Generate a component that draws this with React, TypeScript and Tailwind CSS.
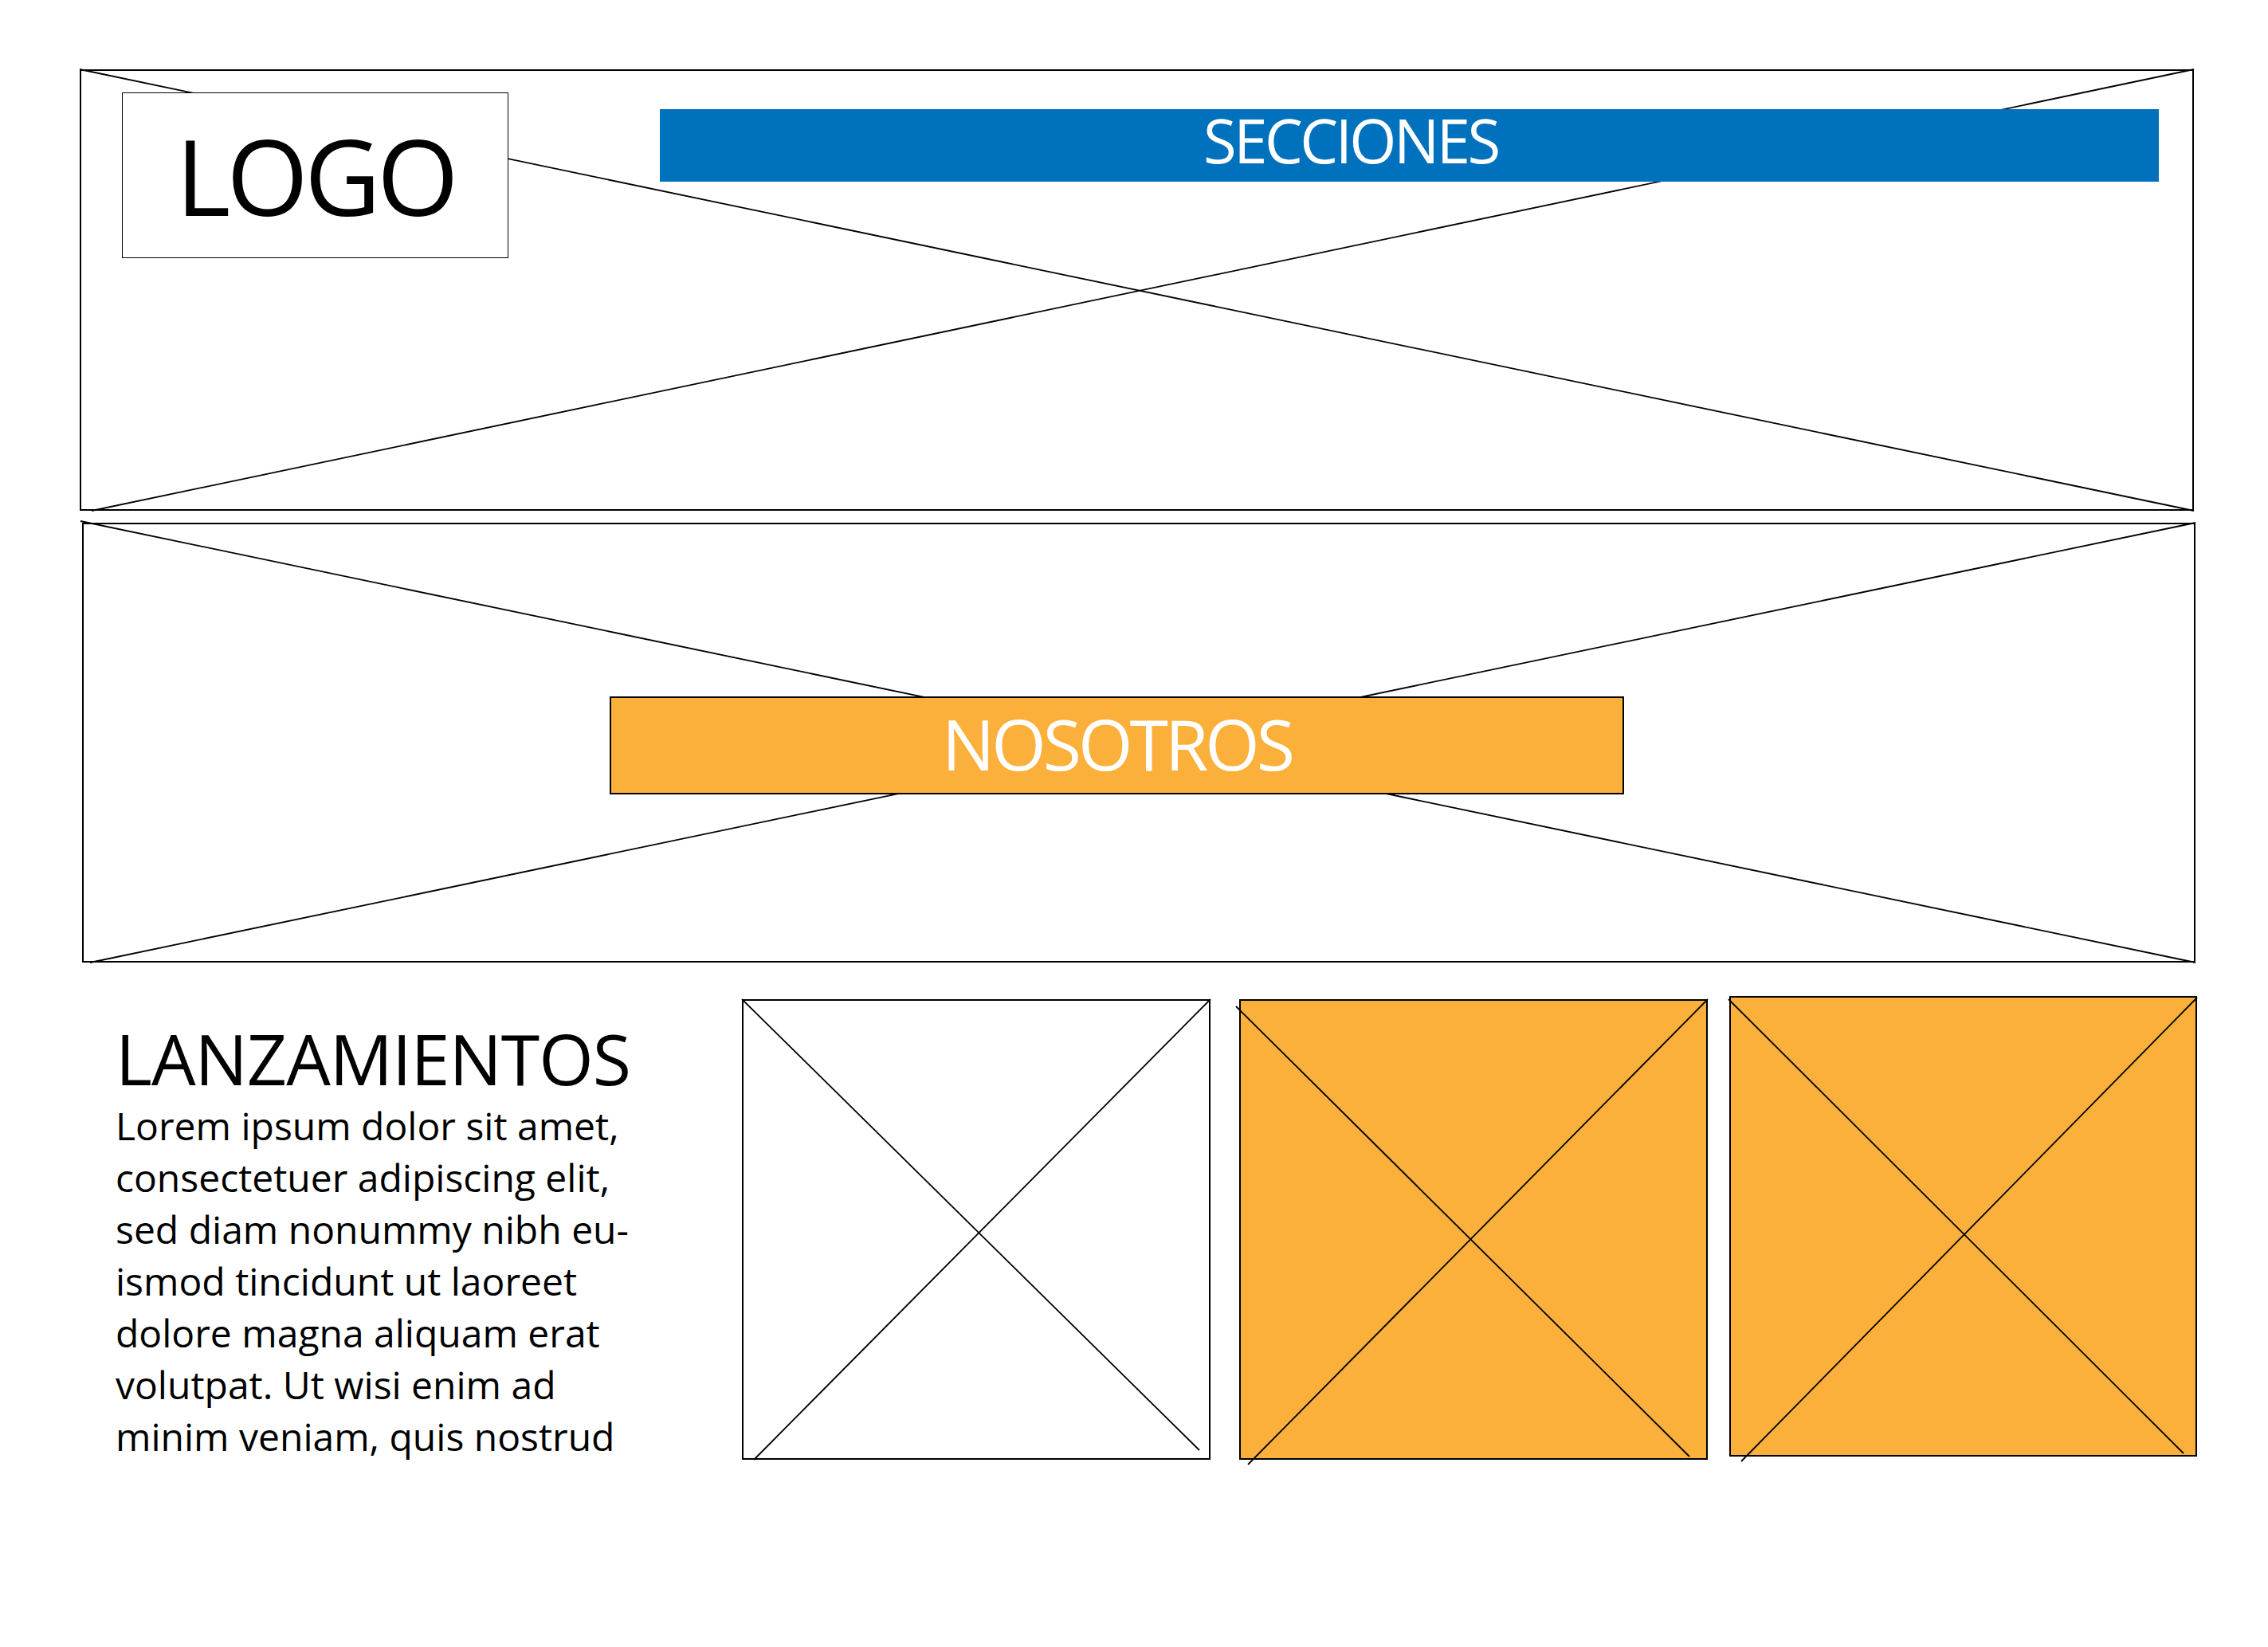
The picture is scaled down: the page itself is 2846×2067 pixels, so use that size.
type Seg = [number, number, number, number];

// placeholder "X" drawn over a box, coordinates are relative to the outer border box
function Cross({ w, h, lines }: { w: number; h: number; lines: Seg[] }) {
  return (
    <svg
      className="pointer-events-none absolute left-[-2px] top-[-2px] overflow-visible"
      width={w}
      height={h}
      viewBox={`0 0 ${w} ${h}`}
    >
      {lines.map(([x1, y1, x2, y2], i) => (
        <line key={i} x1={x1} y1={y1} x2={x2} y2={y2} stroke="#000" strokeWidth={1.8} />
      ))}
    </svg>
  );
}

const body = [
  "Lorem ipsum dolor sit amet,",
  "consectetuer adipiscing elit,",
  "sed diam nonummy nibh eu-",
  "ismod tincidunt ut laoreet",
  "dolore magna aliquam erat",
  "volutpat. Ut wisi enim ad",
  "minim veniam, quis nostrud",
];

export default function App() {
  return (
    <div className="h-[2067px] w-[2846px] bg-white font-['Open_Sans',sans-serif] text-black">
      {/* header */}
      <div className="pl-[100px] pt-[87px]">
        <div className="relative flex h-[554px] w-[2653px] items-start border-2 border-black pl-[51px] pr-[42px] pt-[27px]">
          <Cross w={2653} h={554} lines={[[0, 0, 2653, 554], [2653, 0, 15, 554]]} />
          <div className="relative flex h-[208px] w-[485px] items-center justify-center border-[1.5px] border-black bg-white">
            <span className="text-[132px] leading-none tracking-[-5px]">LOGO</span>
          </div>
          <div className="relative ml-[190px] mt-[21px] h-[91px] flex-1 bg-[#0071bc] pl-[682px] pt-[1px]">
            <span className="text-[76px] leading-none tracking-[-3.5px] text-white">SECCIONES</span>
          </div>
        </div>
      </div>

      {/* nosotros banner */}
      <div className="ml-[103px] mt-[15px]">
        <div className="relative h-[552px] w-[2652px] border-2 border-black pl-[660px] pt-[216px]">
          <Cross w={2652} h={552} lines={[[-2, -2, 2652, 552], [2652, 0, 10, 552]]} />
          <div className="relative flex h-[123px] w-[1273px] items-center justify-center border-2 border-black bg-[#fbb03b] pb-[6px]">
            <span className="text-[88px] leading-none tracking-[-4px] text-white">NOSOTROS</span>
          </div>
        </div>
      </div>

      {/* lanzamientos */}
      <div className="mt-[42px] flex items-start">
        <div className="w-[931px] pl-[145px]">
          <h2 className="mt-[40px] text-[88px] font-normal leading-[76px] tracking-[-1px]">LANZAMIENTOS</h2>
          <div className="mt-[14px] text-[48px] leading-[65px]">
            {body.map((l) => (
              <div key={l} className="whitespace-nowrap">
                {l}
              </div>
            ))}
          </div>
        </div>

        <div className="relative mt-[4px] h-[578px] w-[588px] border-2 border-black bg-white">
          <Cross w={588} h={578} lines={[[0, 0, 574, 566], [588, 0, 15, 578]]} />
        </div>
        <div className="relative ml-[36px] mt-[4px] h-[578px] w-[588px] border-2 border-black bg-[#fbb03b]">
          <Cross w={588} h={578} lines={[[-4, 9, 565, 574], [11, 584, 588, 0]]} />
        </div>
        <div className="relative ml-[27px] h-[578px] w-[587px] border-2 border-black bg-[#fbb03b]">
          <Cross w={587} h={578} lines={[[-1, 4, 570, 574], [15, 584, 587, 2]]} />
        </div>
      </div>
    </div>
  );
}
